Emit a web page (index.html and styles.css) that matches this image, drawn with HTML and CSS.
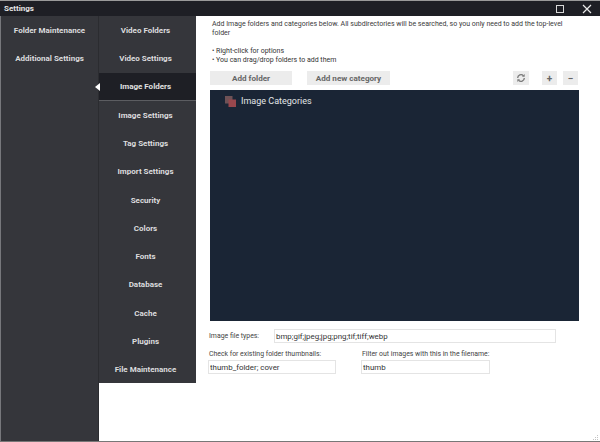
FILE: index.html
```html
<!DOCTYPE html>
<html lang="en">
<head>
<meta charset="utf-8">
<title>Settings</title>
<link rel="stylesheet" href="styles.css">
</head>
<body>
<div class="window">
  <header class="titlebar">
    <span class="title">Settings</span>
    <div class="controls">
      <svg class="ctl" width="10" height="10" viewBox="0 0 10 10"><rect x="1.5" y="1.5" width="7" height="7" fill="none" stroke="#d8d8d8" stroke-width="1"/></svg>
      <svg class="ctl" width="10" height="10" viewBox="0 0 10 10"><path d="M1 1L9 9M9 1L1 9" stroke="#e8e8e8" stroke-width="1.2" fill="none"/></svg>
    </div>
  </header>
  <div class="body">
    <nav class="nav1">
      <div class="navitem">Folder Maintenance</div>
      <div class="navitem">Additional Settings</div>
    </nav>
    <nav class="nav2">
      <div class="navitem">Video Folders</div>
      <div class="navitem">Video Settings</div>
      <div class="navitem active">Image Folders</div>
      <div class="navitem">Image Settings</div>
      <div class="navitem">Tag Settings</div>
      <div class="navitem">Import Settings</div>
      <div class="navitem">Security</div>
      <div class="navitem">Colors</div>
      <div class="navitem">Fonts</div>
      <div class="navitem">Database</div>
      <div class="navitem">Cache</div>
      <div class="navitem">Plugins</div>
      <div class="navitem">File Maintenance</div>
    </nav>
    <main class="content">
      <p class="intro">Add Image folders and categories below. All subdirectories will be searched, so you only need to add the top-level folder</p>
      <ul class="tips">
        <li>• Right-click for options</li>
        <li>• You can drag/drop folders to add them</li>
      </ul>
      <div class="toolbar">
        <button class="btn wide1">Add folder</button>
        <button class="btn wide2">Add new category</button>
        <button class="btn icon refresh" aria-label="Refresh">
          <svg width="10" height="10" viewBox="0 0 12 12"><path d="M2 6a4 4 0 0 1 6.9-2.7M10 6a4 4 0 0 1-6.9 2.7" fill="none" stroke="#7a7a7a" stroke-width="1.6"/><path d="M10.4 1.2v3.2H7.2zM1.6 10.8V7.6h3.2z" fill="#7a7a7a"/></svg>
        </button>
        <button class="btn icon plus">+</button>
        <button class="btn icon minus">−</button>
      </div>
      <div class="tree">
        <div class="treeitem">
          <svg width="11" height="11" viewBox="0 0 11 11"><rect x="0" y="0" width="7.5" height="7.5" fill="#6f5256"/><rect x="3.5" y="3.5" width="7.5" height="7.5" fill="#98474d"/></svg>
          <span>Image Categories</span>
        </div>
      </div>
      <div class="types">
        <label class="lbl">Image file types:</label>
        <input class="field typesfield" value="bmp;gif;jpeg;jpg;png;tif;tiff;webp">
      </div>
      <div class="filters">
        <div class="group g1">
          <label class="lbl">Check for existing folder thumbnails:</label>
          <input class="field" value="thumb_folder; cover">
        </div>
        <div class="group g2">
          <label class="lbl">Filter out images with this in the filename:</label>
          <input class="field" value="thumb">
        </div>
      </div>
    </main>
  </div>
  <svg class="grip" width="6" height="6" viewBox="0 0 6 6"><path d="M4 0h1v1H4zM2 2h1v1H2zM4 2h1v1H4zM0 4h1v1H0zM2 4h1v1H2zM4 4h1v1H4z" fill="#c4c4c4"/></svg>
</div>
</body>
</html>
```
FILE: styles.css
```css
* { box-sizing: border-box; }
html, body { margin: 0; padding: 0; }
body { width: 600px; height: 442px; overflow: hidden; background: #fff; font-family: Roboto, "Liberation Sans", Arial, sans-serif; }
.window { position: relative; width: 600px; height: 442px; display: flex; flex-direction: column; border-bottom: 1px solid #777; border-top: 1px solid #9a9a9a; }
.grip { position: absolute; right: 1px; bottom: 0; }
.titlebar { height: 15px; flex: none; background: #1e1f25; color: #e4e4e4; display: flex; align-items: center; justify-content: space-between; padding-left: 4px; font-size: 8px; font-weight: bold; }
.controls { display: flex; gap: 17px; padding-right: 8px; align-items: center; }
.ctl { display: block; }
.body { flex: 1; display: flex; min-height: 0; }
.nav1 { width: 99px; flex: none; background: #35363b; border-left: 1px solid #77787c; border-right: 1px solid #2b2c30; }
.nav2 { width: 97px; flex: none; height: 367px; background: #35363b; display: flex; flex-direction: column; }
.navitem { height: 28.25px; flex: none; padding-top: 1px; display: flex; align-items: center; justify-content: center; color: #dcdcde; font-size: 8px; font-weight: bold; }
.nav2 .navitem { padding-right: 4px; }
.active { position: relative; background: #1e1f25; color: #e0e0e0; border-bottom: 1px solid #5c5d61; }
.active::before { content: ""; position: absolute; left: -4px; top: 10px; border-style: solid; border-width: 4px 5px 4px 0; border-color: transparent #fff transparent transparent; }
.content { flex: 1; min-width: 0; padding: 4px 20px 0 14px; color: #333; font-size: 7px; }
.intro { margin: 0 0 0 2px; line-height: 9px; width: 358px; color: #3a3a3a; }
.tips { list-style: none; margin: 9px 0 0 2px; padding: 0; line-height: 9px; }
.toolbar { display: flex; align-items: center; margin-top: 6px; height: 14px; }
.btn { height: 14px; border: none; padding: 0; background: #ececec; color: #666; font: bold 8.1px Roboto, "Liberation Sans", Arial, sans-serif; }
.wide1 { width: 82px; }
.wide2 { width: 83px; margin-left: 15px; }
.icon { display: flex; align-items: center; justify-content: center; }
.refresh { width: 16px; margin-left: 123px; }
.plus { width: 15px; margin-left: 13px; font-size: 10px; }
.minus { width: 15px; margin-left: 6px; font-size: 10px; }
.tree { width: 369px; height: 231px; margin-top: 5px; background: #1a2535; color: #e3e5e8; padding-top: 5px; }
.treeitem { display: flex; align-items: center; gap: 5px; padding-left: 15px; font-size: 9px; height: 12px; }
.types { display: flex; align-items: center; margin-top: 8px; margin-left: -1px; }
.types .lbl { width: 65px; flex: none; }
.lbl { font-size: 6.9px; line-height: 9px; color: #444; }
.field { height: 14px; border: 1px solid #e4e4e4; padding: 0 1px; font: 7.9px Roboto, "Liberation Sans", Arial, sans-serif; color: #333; background: #fff; outline: none; }
.typesfield { width: 282px; }
.filters { display: flex; margin-top: 7px; margin-left: -2px; }
.group { display: flex; flex-direction: column; gap: 1px; }
.g1 { width: 153px; }
.g1 .field { width: 128px; }
.g1 .lbl { margin-left: 1px; }
.g2 .field { width: 129px; }
.g2 .lbl { margin-left: 1px; }
```
